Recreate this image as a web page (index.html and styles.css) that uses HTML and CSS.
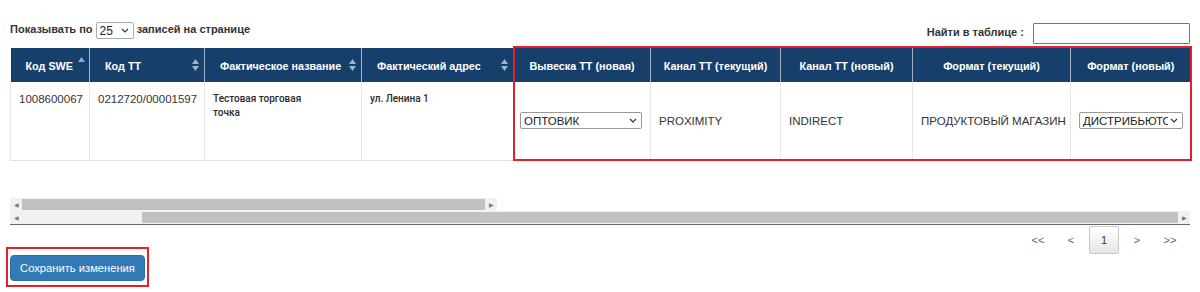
FILE: index.html
```html
<!DOCTYPE html>
<html lang="ru">
<head>
    <meta charset="UTF-8">
    <title>Точки продаж</title>
    <link rel="stylesheet" href="styles.css">
</head>
<body>
    <div class="page">
        <!-- Top controls -->
        <div class="top-bar">
            <label class="length">Показывать по
                <span class="select-wrap">
                    <select class="length-select">
                        <option>25</option>
                        <option>50</option>
                        <option>100</option>
                    </select>
                    <svg class="chev" width="8" height="5" viewBox="0 0 8 5"><path d="M1 1l3 3 3-3" fill="none" stroke="#333" stroke-width="1.2"/></svg>
                </span>
                записей на странице</label>
            <label class="search">Найти в таблице : <input type="text" class="search-input"></label>
        </div>

        <!-- Table -->
        <div class="table-wrap">
            <table class="grid">
                <colgroup>
                    <col style="width:79px">
                    <col style="width:115px">
                    <col style="width:157px">
                    <col style="width:152px">
                    <col style="width:137px">
                    <col style="width:130px">
                    <col style="width:132px">
                    <col style="width:158px">
                    <col style="width:120px">
                </colgroup>
                <thead>
                    <tr>
                        <th class="sort">Код SWE
                            <svg class="sort-icon asc" width="7" height="6" viewBox="0 0 7 6"><path d="M3.5 0L7 5H0z" fill="#9d9df5"/></svg>
                        </th>
                        <th class="sort">Код ТТ
                            <svg class="sort-icon" width="7" height="12" viewBox="0 0 7 12"><path d="M3.5 0L7 5H0zM3.5 12L0 7h7z" fill="#a9b3c0"/></svg>
                        </th>
                        <th class="sort">Фактическое название
                            <svg class="sort-icon" width="7" height="12" viewBox="0 0 7 12"><path d="M3.5 0L7 5H0zM3.5 12L0 7h7z" fill="#a9b3c0"/></svg>
                        </th>
                        <th class="sort">Фактический адрес
                            <svg class="sort-icon" width="7" height="12" viewBox="0 0 7 12"><path d="M3.5 0L7 5H0zM3.5 12L0 7h7z" fill="#a9b3c0"/></svg>
                        </th>
                        <th>Вывеска ТТ (новая)</th>
                        <th>Канал ТТ (текущий)</th>
                        <th>Канал ТТ (новый)</th>
                        <th>Формат (текущий)</th>
                        <th>Формат (новый)</th>
                    </tr>
                </thead>
                <tbody>
                    <tr>
                        <td class="top">1008600067</td>
                        <td class="top">0212720/00001597</td>
                        <td class="top name">Тестовая торговая<br>точка</td>
                        <td class="top name">ул. Ленина 1</td>
                        <td>
                            <span class="select-wrap wide">
                                <select class="cell-select">
                                    <option>ОПТОВИК</option>
                                    <option>СУПЕРМАРКЕТ</option>
                                </select>
                                <svg class="chev" width="8" height="5" viewBox="0 0 8 5"><path d="M1 1l3 3 3-3" fill="none" stroke="#333" stroke-width="1.2"/></svg>
                            </span>
                        </td>
                        <td>PROXIMITY</td>
                        <td>INDIRECT</td>
                        <td>ПРОДУКТОВЫЙ МАГАЗИН</td>
                        <td>
                            <span class="select-wrap narrow">
                                <select class="cell-select">
                                    <option>ДИСТРИБЬЮТОР</option>
                                    <option>МАГАЗИН</option>
                                </select>
                                <svg class="chev" width="8" height="5" viewBox="0 0 8 5"><path d="M1 1l3 3 3-3" fill="none" stroke="#333" stroke-width="1.2"/></svg>
                            </span>
                        </td>
                    </tr>
                </tbody>
            </table>
            <!-- highlight of edited columns -->
            <div class="highlight"></div>
        </div>

        <!-- Fake scrollbars -->
        <div class="scroll inner">
            <span class="arrow">&#9664;</span>
            <span class="thumb"></span>
            <span class="arrow">&#9654;</span>
        </div>
        <div class="scroll outer">
            <span class="arrow">&#9664;</span>
            <span class="track-gap"></span>
            <span class="thumb"></span>
            <span class="arrow">&#9654;</span>
        </div>

        <!-- Bottom -->
        <div class="bottom-bar">
            <div class="save-box">
                <button class="save-btn">Сохранить изменения</button>
            </div>
            <div class="pager">
                <a>&lt;&lt;</a>
                <a>&lt;</a>
                <a class="current">1</a>
                <a>&gt;</a>
                <a>&gt;&gt;</a>
            </div>
        </div>
    </div>
</body>
</html>
```

FILE: styles.css
```css
* {
    box-sizing: border-box;
    margin: 0;
    padding: 0;
}

body {
    font-family: 'Liberation Sans', Arial, sans-serif;
    color: #333;
    background: #fff;
}

.page {
    padding: 0 10px;
}

/* Top controls */
.top-bar {
    display: flex;
    justify-content: space-between;
    align-items: flex-end;
    height: 45px;
    padding-bottom: 1px;
}

.length {
    font-size: 11px;
    font-weight: bold;
    margin-bottom: 5px;
}

.select-wrap {
    display: inline-block;
    position: relative;
    vertical-align: middle;
}

.select-wrap .chev {
    position: absolute;
    right: 5px;
    top: 6px;
    pointer-events: none;
}

.length-select {
    appearance: none;
    width: 38px;
    height: 17px;
    font-size: 12px;
    font-family: 'Liberation Sans', Arial, sans-serif;
    color: #222;
    border: 1px solid #aaa;
    border-radius: 2px;
    padding: 0 3px;
    background: #fff;
    display: block;
}

.search {
    font-size: 11px;
    font-weight: bold;
}

.search-input {
    width: 157px;
    height: 21px;
    border: 1px solid #767676;
    border-radius: 1px;
    margin-left: 6px;
    vertical-align: middle;
}

/* Table */
.table-wrap {
    position: relative;
    margin-top: 3px;
}

.grid {
    border-collapse: collapse;
    table-layout: fixed;
    width: 1180px;
}

.grid th {
    background: #173f6b;
    color: #fff;
    font-size: 10.8px;
    font-weight: bold;
    height: 34px;
    text-align: center;
    border-left: 1px solid #9fb0c4;
    white-space: nowrap;
    padding: 1px 6px 0;
}

.grid th:first-child {
    border-left: none;
}

.grid th.sort {
    text-align: left;
    padding-left: 15px;
    position: relative;
}

.sort-icon {
    position: absolute;
    right: 5px;
    top: 11px;
}

.sort-icon.asc {
    right: 4px;
    top: 9px;
}

.grid td {
    height: 78px;
    font-size: 11.5px;
    padding: 0 8px;
    border-left: 1px solid #e6e6e6;
    border-bottom: 1px solid #e0e0e0;
    vertical-align: middle;
    white-space: nowrap;
}

.grid td:last-child {
    border-right: 1px solid #e6e6e6;
}

.grid td.top {
    vertical-align: top;
    padding-top: 11px;
}

.grid td.name {
    font-family: Roboto, 'Liberation Sans', sans-serif;
    font-size: 10px;
    font-weight: 500;
    color: #2a2a2a;
    line-height: 14px;
    padding-top: 10px;
}

.cell-select {
    appearance: none;
    display: block;
    width: 100%;
    height: 17px;
    font-size: 11.5px;
    font-family: 'Liberation Sans', Arial, sans-serif;
    color: #222;
    border: 1px solid #999;
    border-radius: 2px;
    background: #fff;
    padding: 0 14px 0 3px;
    overflow: hidden;
    text-overflow: clip;
}

.select-wrap.wide {
    width: 122px;
    margin-left: -2px;
}

.select-wrap.narrow {
    width: 104px;
}

.highlight {
    position: absolute;
    left: 503px;
    top: -2px;
    width: 679px;
    height: 115px;
    border: 2px solid #e6202b;
    pointer-events: none;
}

/* Fake scrollbars */
.scroll {
    display: flex;
    align-items: center;
    height: 13px;
    background: #f1f1f1;
}

.scroll .arrow {
    width: 12px;
    font-size: 6px;
    color: #777;
    text-align: center;
}

.scroll .thumb {
    height: 11px;
    background: #c1c1c1;
    flex: 1;
}

.scroll.inner {
    width: 487px;
    margin-top: 37px;
}

.scroll.outer {
    width: 1180px;
    border-bottom: 1px solid #666;
    height: 14px;
}

.scroll.outer .track-gap {
    width: 120px;
}

/* Bottom */
.bottom-bar {
    display: flex;
    justify-content: space-between;
    align-items: flex-start;
}

.save-box {
    margin-top: 22px;
    margin-left: -4px;
    border: 2px solid #e6202b;
    padding: 6px 2px 4px 2px;
}

.save-btn {
    display: block;
    width: 135px;
    height: 26px;
    background: #337ab7;
    color: #fff;
    border: 1px solid #2e6da4;
    border-radius: 4px;
    font-size: 11.2px;
    font-family: 'Liberation Sans', Arial, sans-serif;
}

.pager {
    display: flex;
    align-items: center;
    margin-top: 1px;
    margin-right: 5px;
    font-size: 11px;
    color: #666;
}

.pager a {
    min-width: 30px;
    height: 28px;
    line-height: 26px;
    text-align: center;
    margin-left: 3px;
    border: 1px solid transparent;
}

.pager a.current {
    color: #333;
    border: 1px solid #c8c8c8;
    border-radius: 2px;
    background: linear-gradient(#fff, #e6e6e6);
}
```
